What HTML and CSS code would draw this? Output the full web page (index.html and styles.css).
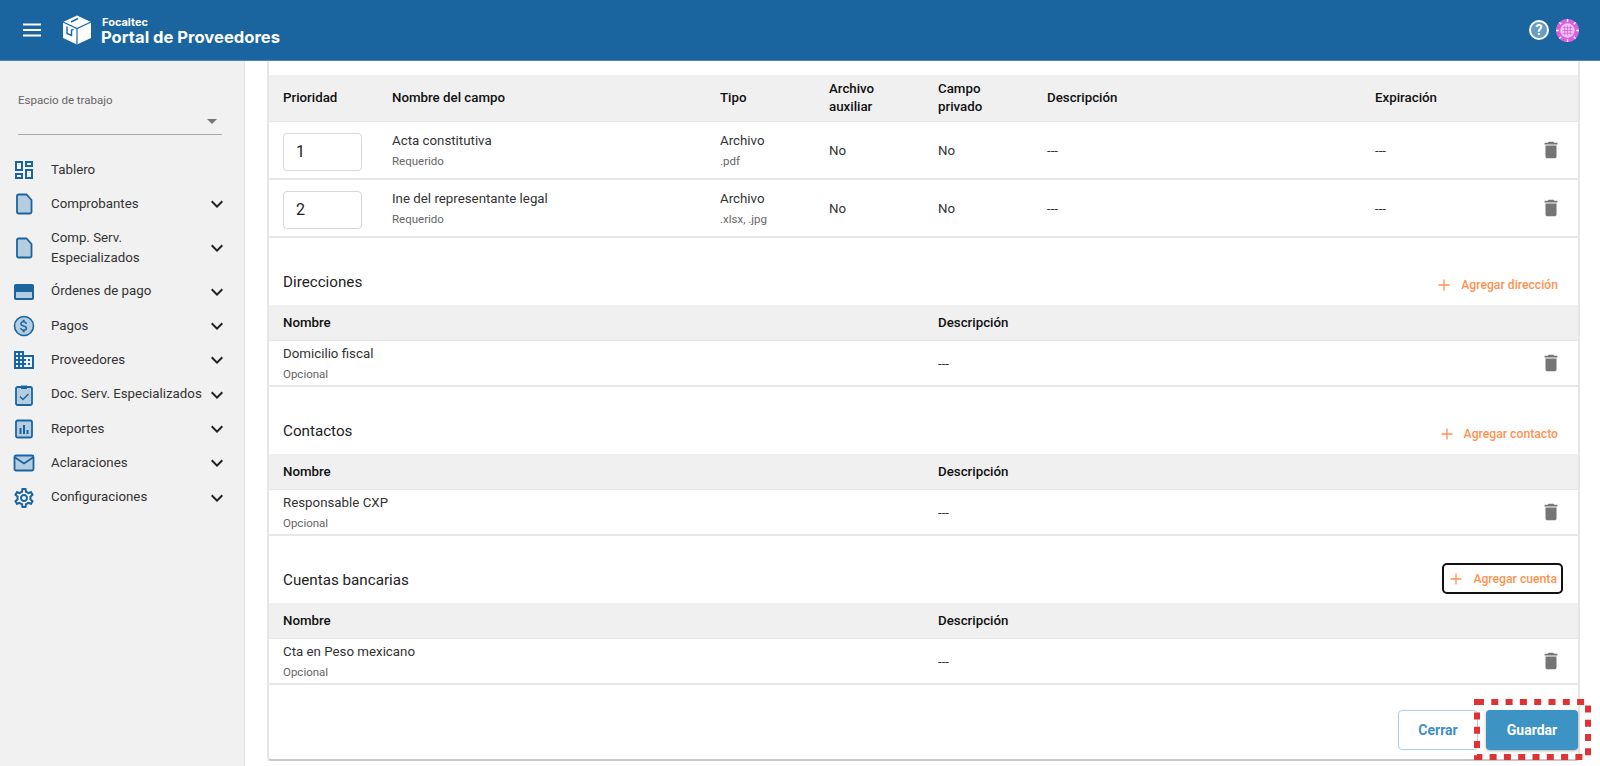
FILE: index.html
```html
<!DOCTYPE html>
<html lang="es">

<head>
    <meta charset="UTF-8">
    <meta name="viewport" content="width=device-width, initial-scale=1.0">
    <title>Portal de Proveedores</title>
    <link rel="stylesheet" href="styles.css">
</head>

<body>
    <svg class="defs" width="0" height="0">
        <symbol id="chev" viewBox="0 0 24 24"><path d="M7.41 8.59 12 13.17l4.59-4.58L18 10l-6 6-6-6z" /></symbol>
        <symbol id="trash" viewBox="0 0 24 24"><path d="M6 19c0 1.1.9 2 2 2h8c1.1 0 2-.9 2-2V7H6v12zM19 4h-3.5l-1-1h-5l-1 1H5v2h14V4z" /></symbol>
        <symbol id="plus" viewBox="0 0 12 12"><path d="M6 .5v11M.5 6h11" fill="none" stroke="currentColor" stroke-width="1.3" /></symbol>
        <symbol id="doc" viewBox="0 0 24 24"><path d="M6.500 2.500h8l5 5.500v12c0 .9-.7 1.500-1.500 1.500H6.500c-.8 0-1.500-.6-1.500-1.500V4c0-.9.700-1.500 1.500-1.500z" fill="#b5cde0" stroke="#1a659f" stroke-width="1.800" /></symbol>
    </svg>

    <header class="topbar">
        <svg class="burger" viewBox="0 0 18 14"><path d="M0 1.500h18M0 7h18M0 12.500h18" stroke="#fff" stroke-width="2" /></svg>
        <svg class="logo" viewBox="0 0 30 30"><path d="M15 .5 29 7v16l-14 6.500L1 23V7z" fill="#fff" /><path d="M15 13.500v16M1 7l14 6.500L29 7" fill="none" stroke="#1a659f" stroke-width="1.200" /><path d="M5 11.500v7l4.500 2v-5c0-1 1-1 2-.5M9 7l7-3.500" fill="none" stroke="#1a659f" stroke-width="1.400" /></svg>
        <div class="brand">
            <span class="brand-small">Focaltec</span>
            <span class="brand-big">Portal de Proveedores</span>
        </div>
        <div class="top-right">
            <span class="help">?</span>
            <svg class="avatar" viewBox="0 0 24 24">
                <circle cx="12" cy="12" r="12" fill="#d860e0" />
                <circle cx="12" cy="12" r="7.500" fill="#f3c4f4" />
                <path d="M7 9h10M7 12h10M7 15h10M9 7v10M12 7v10M15 7v10" stroke="#d860e0" stroke-width=".8" />
                <path d="M12 0v3M12 21v3M0 12h3M21 12h3M3.500 3.500l2 2M18.500 18.500l2 2M3.500 20.500l2-2M18.500 5.500l2-2" stroke="#fff" stroke-width="1.400" />
            </svg>
        </div>
    </header>

    <div class="layout">
        <aside class="sidebar">
            <div class="workspace">
                <label>Espacio de trabajo</label>
                <div class="select"><span class="caret"></span></div>
            </div>
            <nav class="menu">
                <a class="item">
                    <svg class="ico" viewBox="0 0 24 24"><path d="M19 5v2h-4V5h4M9 5v6H5V5h4m10 8v6h-4v-6h4M9 17v2H5v-2h4M21 3h-8v6h8V3zM11 3H3v10h8V3zm10 8h-8v10h8V11zm-10 4H3v6h8v-6z" /></svg>
                    <span class="lbl">Tablero</span>
                </a>
                <a class="item">
                    <svg class="ico"><use href="#doc" /></svg>
                    <span class="lbl">Comprobantes</span>
                    <svg class="chev"><use href="#chev" /></svg>
                </a>
                <a class="item tall">
                    <svg class="ico"><use href="#doc" /></svg>
                    <span class="lbl">Comp. Serv. Especializados</span>
                    <svg class="chev"><use href="#chev" /></svg>
                </a>
                <a class="item">
                    <svg class="ico" viewBox="0 0 24 24"><rect x="2" y="4" width="20" height="16" rx="2" fill="#b5cde0" /><path d="M20 4H4c-1.110 0-1.990.89-1.990 2L2 18c0 1.110.89 2 2 2h16c1.110 0 2-.89 2-2V6c0-1.110-.89-2-2-2zm0 14H4v-6h16v6zm0-10H4V6h16v2z" /><rect x="2" y="6" width="20" height="5" /></svg>
                    <span class="lbl">Órdenes de pago</span>
                    <svg class="chev"><use href="#chev" /></svg>
                </a>
                <a class="item">
                    <svg class="ico" viewBox="0 0 24 24"><circle cx="12" cy="12" r="9.500" fill="#b5cde0" stroke="#1a659f" stroke-width="1.600" /><path transform="translate(3.600 3.600) scale(.7)" d="M11.800 10.900c-2.270-.59-3-1.200-3-2.150 0-1.090 1.010-1.850 2.700-1.850 1.780 0 2.440.85 2.500 2.100h2.210c-.07-1.720-1.120-3.300-3.210-3.810V3h-3v2.160c-1.940.42-3.500 1.680-3.500 3.610 0 2.310 1.910 3.460 4.700 4.130 2.500.6 3 1.480 3 2.410 0 .69-.49 1.790-2.700 1.790-2.060 0-2.870-.92-2.980-2.100h-2.200c.12 2.190 1.760 3.420 3.700 3.830V21h3v-2.150c1.950-.37 3.500-1.500 3.500-3.550 0-2.840-2.430-3.810-4.700-4.400z" /></svg>
                    <span class="lbl">Pagos</span>
                    <svg class="chev"><use href="#chev" /></svg>
                </a>
                <a class="item">
                    <svg class="ico" viewBox="0 0 24 24"><path d="M12 7V3H2v18h20V7H12zM6 19H4v-2h2v2zm0-4H4v-2h2v2zm0-4H4V9h2v2zm0-4H4V5h2v2zm4 12H8v-2h2v2zm0-4H8v-2h2v2zm0-4H8V9h2v2zm0-4H8V5h2v2zm10 12h-8v-2h2v-2h-2v-2h2v-2h-2V9h8v10zm-2-8h-2v2h2v-2zm0 4h-2v2h2v-2z" /></svg>
                    <span class="lbl">Proveedores</span>
                    <svg class="chev"><use href="#chev" /></svg>
                </a>
                <a class="item">
                    <svg class="ico" viewBox="0 0 24 24"><rect x="4" y="4" width="16" height="18" rx="1.500" fill="#b5cde0" stroke="#1a659f" stroke-width="1.800" /><path d="M9 2.500h6V6H9z" /><path d="m8 13.500 3 3 5.500-5.500" fill="none" stroke="#1a659f" stroke-width="1.500" /></svg>
                    <span class="lbl nowrap">Doc. Serv. Especializados</span>
                    <svg class="chev"><use href="#chev" /></svg>
                </a>
                <a class="item">
                    <svg class="ico" viewBox="0 0 24 24"><rect x="4" y="3.500" width="16" height="17" rx="1.500" fill="#b5cde0" stroke="#1a659f" stroke-width="1.800" /><path d="M7.500 11h2v6h-2zM11 8h2v9h-2zM14.500 13h2v4h-2z" /></svg>
                    <span class="lbl">Reportes</span>
                    <svg class="chev"><use href="#chev" /></svg>
                </a>
                <a class="item">
                    <svg class="ico" viewBox="0 0 24 24"><rect x="2.500" y="4.500" width="19" height="15" rx="1.500" fill="#b5cde0" stroke="#1a659f" stroke-width="1.800" /><path d="m3 6.500 9 6 9-6" fill="none" stroke="#1a659f" stroke-width="1.800" /></svg>
                    <span class="lbl">Aclaraciones</span>
                    <svg class="chev"><use href="#chev" /></svg>
                </a>
                <a class="item">
                    <svg class="ico" viewBox="0 0 24 24"><path d="M19.430 12.980c.04-.32.07-.64.07-.98 0-.34-.03-.66-.07-.98l2.110-1.650c.19-.15.24-.42.12-.64l-2-3.460c-.09-.16-.26-.25-.44-.25-.06 0-.12.01-.17.03l-2.490 1c-.52-.4-1.080-.73-1.690-.98l-.38-2.650C14.460 2.180 14.250 2 14 2h-4c-.25 0-.46.18-.49.42l-.38 2.650c-.61.25-1.170.59-1.690.98l-2.490-1c-.06-.02-.12-.03-.18-.03-.17 0-.34.09-.43.25l-2 3.460c-.13.22-.07.49.12.64l2.110 1.650c-.04.32-.07.65-.07.98 0 .33.03.66.07.98l-2.110 1.650c-.19.15-.24.42-.12.64l2 3.460c.09.16.26.25.44.25.06 0 .12-.01.17-.03l2.490-1c.52.4 1.080.73 1.690.98l.38 2.650c.03.24.24.42.49.42h4c.25 0 .46-.18.49-.42l.38-2.650c.61-.25 1.170-.59 1.690-.98l2.490 1c.06.02.12.03.18.03.17 0 .34-.09.43-.25l2-3.460c.12-.22.07-.49-.12-.64l-2.110-1.650zm-1.980-1.710c.04.31.05.52.05.73 0 .21-.02.43-.05.73l-.14 1.130.89.7 1.080.84-.7 1.210-1.270-.51-1.040-.42-.9.68c-.43.32-.84.56-1.250.73l-1.060.43-.16 1.130-.2 1.350h-1.400l-.19-1.350-.16-1.130-1.060-.43c-.43-.18-.83-.41-1.230-.71l-.91-.7-1.060.43-1.270.51-.7-1.210 1.080-.84.89-.7-.14-1.130c-.03-.31-.05-.54-.05-.74s.02-.43.05-.73l.14-1.130-.89-.7-1.080-.84.7-1.210 1.270.51 1.040.42.9-.68c.43-.32.84-.56 1.250-.73l1.060-.43.16-1.130.2-1.350h1.390l.19 1.350.16 1.130 1.060.43c.43.18.83.41 1.230.71l.91.7 1.060-.43 1.270-.51.7 1.210-1.070.85-.89.7.14 1.130zM12 8c-2.210 0-4 1.790-4 4s1.790 4 4 4 4-1.790 4-4-1.790-4-4-4zm0 6c-1.100 0-2-.9-2-2s.9-2 2-2 2 .9 2 2-.9 2-2 2z" /></svg>
                    <span class="lbl">Configuraciones</span>
                    <svg class="chev"><use href="#chev" /></svg>
                </a>
            </nav>
        </aside>

        <main class="content">
            <div class="card">
                <!-- campos -->
                <div class="grid fields head">
                    <span>Prioridad</span>
                    <span>Nombre del campo</span>
                    <span>Tipo</span>
                    <span>Archivo auxiliar</span>
                    <span>Campo privado</span>
                    <span>Descripción</span>
                    <span>Expiración</span>
                </div>
                <div class="grid fields row">
                    <input class="prio" value="1">
                    <div><p>Acta constitutiva</p><small>Requerido</small></div>
                    <div><p>Archivo</p><small>.pdf</small></div>
                    <span>No</span>
                    <span>No</span>
                    <span>---</span>
                    <span>---</span>
                    <svg class="trash"><use href="#trash" /></svg>
                </div>
                <div class="grid fields row">
                    <input class="prio" value="2">
                    <div><p>Ine del representante legal</p><small>Requerido</small></div>
                    <div><p>Archivo</p><small>.xlsx, .jpg</small></div>
                    <span>No</span>
                    <span>No</span>
                    <span>---</span>
                    <span>---</span>
                    <svg class="trash"><use href="#trash" /></svg>
                </div>

                <!-- direcciones -->
                <div class="section-head">
                    <h3>Direcciones</h3>
                    <a class="add"><svg class="plus"><use href="#plus" /></svg>Agregar dirección</a>
                </div>
                <div class="grid simple head">
                    <span>Nombre</span>
                    <span>Descripción</span>
                </div>
                <div class="grid simple row small-row">
                    <div><p>Domicilio fiscal</p><small>Opcional</small></div>
                    <span>---</span>
                    <svg class="trash"><use href="#trash" /></svg>
                </div>

                <!-- contactos -->
                <div class="section-head">
                    <h3>Contactos</h3>
                    <a class="add"><svg class="plus"><use href="#plus" /></svg>Agregar contacto</a>
                </div>
                <div class="grid simple head">
                    <span>Nombre</span>
                    <span>Descripción</span>
                </div>
                <div class="grid simple row small-row">
                    <div><p>Responsable CXP</p><small>Opcional</small></div>
                    <span>---</span>
                    <svg class="trash"><use href="#trash" /></svg>
                </div>

                <!-- cuentas -->
                <div class="section-head">
                    <h3>Cuentas bancarias</h3>
                    <a class="add focused"><svg class="plus"><use href="#plus" /></svg>Agregar cuenta</a>
                </div>
                <div class="grid simple head">
                    <span>Nombre</span>
                    <span>Descripción</span>
                </div>
                <div class="grid simple row small-row">
                    <div><p>Cta en Peso mexicano</p><small>Opcional</small></div>
                    <span>---</span>
                    <svg class="trash"><use href="#trash" /></svg>
                </div>

                <div class="actions">
                    <button class="btn ghost">Cerrar</button>
                    <button class="btn solid">Guardar</button>
                    <svg class="marker" viewBox="0 0 117 61"><rect x="3" y="3" width="111" height="55" fill="none" stroke="#e03232" stroke-width="6" stroke-dasharray="7 7.300" /></svg>
                </div>
            </div>
        </main>
    </div>
</body>

</html>
```

FILE: styles.css
```css
* {
    padding: 0;
    margin: 0;
    box-sizing: border-box;
}

body {
    display: flex;
    flex-direction: column;
    height: 100vh;
    overflow: hidden;
    font-family: Roboto, "Liberation Sans", sans-serif;
    font-size: 13.3px;
    color: #333;
    background-color: #fff;
}

.defs {
    position: absolute;
}

/* header */
.topbar {
    display: flex;
    align-items: center;
    flex: none;
    height: 61px;
    padding: 0 21px 0 23px;
    background-color: #1a659f;
    border-bottom: 1px solid #4c86b5;
}

.burger {
    width: 18px;
    height: 14px;
}

.logo {
    width: 30px;
    height: 30px;
    margin-left: 21px;
}

.brand {
    display: flex;
    flex-direction: column;
    margin-left: 9px;
    padding-top: 2px;
    color: #fff;
    font-family: Inter, Roboto, sans-serif;
    font-weight: 700;
}

.brand-small {
    margin-left: 1px;
    font-size: 11px;
    line-height: 11px;
}

.brand-big {
    font-size: 16.6px;
    line-height: 18px;
}

.top-right {
    display: flex;
    align-items: center;
    gap: 7px;
    margin-left: auto;
}

.help {
    width: 20px;
    height: 20px;
    border: 2px solid #fff;
    border-radius: 50%;
    background-color: #679cc4;
    color: #fff;
    font-size: 14px;
    font-weight: 700;
    line-height: 16px;
    text-align: center;
}

.avatar {
    width: 23px;
    height: 23px;
}

.layout {
    display: flex;
    flex: 1;
    min-height: 0;
}

/* sidebar */
.sidebar {
    flex: none;
    width: 245px;
    background-color: #f1f1f1;
    border-right: 1px solid #e2e2e2;
}

.workspace {
    padding: 32px 22px 0 18px;
    height: 92px;
}

.workspace label {
    display: block;
    font-size: 11.5px;
    line-height: 14px;
    color: #666;
}

.select {
    position: relative;
    height: 28px;
    border-bottom: 1px solid #a8a8a8;
}

.caret {
    position: absolute;
    right: 5px;
    top: 12px;
    border-width: 5px 5px 0;
    border-style: solid;
    border-color: #777 transparent transparent;
}

.item {
    display: flex;
    align-items: center;
    height: 34.3px;
    padding: 0 19px 0 12px;
    line-height: 20.5px;
    color: #333;
}

.item.tall {
    height: 53px;
}

.ico {
    flex: none;
    width: 24px;
    height: 24px;
    fill: #1a659f;
}

.lbl {
    flex: 1;
    margin-left: 15px;
    width: 150px;
}

.nowrap {
    white-space: nowrap;
}

.chev {
    flex: none;
    width: 24px;
    height: 24px;
    margin-right: -4px;
    fill: #222;
}

/* content */
.content {
    flex: 1;
    min-width: 0;
    padding: 0 20px 5px 22px;
}

.card {
    height: 100%;
    padding-top: 14px;
    border-left: 2px solid #e6e6e6;
    border-right: 2px solid #e6e6e6;
    border-bottom: 2px solid #c9c9c9;
    border-radius: 0 0 4px 4px;
}

.grid {
    display: grid;
    align-items: center;
    padding-left: 14px;
}

.fields {
    grid-template-columns: 109px 328px 109px 109px 109px 328px 130px 1fr;
}

.simple {
    grid-template-columns: 655px 1fr 60px;
}

.head {
    background-color: #f0f0f0;
    border-bottom: 1px solid #e6e6e6;
    font-weight: 500;
    color: #111;
    line-height: 18px;
}

.fields.head {
    height: 47px;
}

.fields.head span:nth-child(4),
.fields.head span:nth-child(5) {
    width: 70px;
}

.simple.head {
    height: 36px;
}

.row {
    height: 58px;
    border-bottom: 2px solid #e8e8e8;
}

.small-row {
    height: 46px;
}

.row p {
    line-height: 18px;
    color: #333;
}

.row small {
    display: block;
    margin-top: 3px;
    font-size: 11.5px;
    line-height: 16px;
    color: #666;
}

.row > span {
    padding-top: 1px;
}

.prio {
    width: 79px;
    height: 38px;
    margin-top: 3px;
    padding-left: 12px;
    border: 1px solid #d6d6d6;
    border-radius: 4px;
    font-family: inherit;
    font-size: 16px;
    color: #222;
}

.trash {
    justify-self: end;
    width: 22px;
    height: 22px;
    margin-right: 16px;
    fill: #757575;
}

.section-head {
    position: relative;
    display: flex;
    align-items: flex-end;
    justify-content: space-between;
    height: 67px;
    padding: 0 20px 14px 14px;
}

.section-head h3 {
    font-size: 15.2px;
    font-weight: 400;
    line-height: 18px;
    color: #222;
}

.add {
    display: flex;
    align-items: center;
    margin-bottom: -3px;
    font-size: 12.2px;
    font-weight: 500;
    line-height: 18px;
    color: #ff9150;
}

.plus {
    width: 12px;
    height: 12px;
    margin-right: 11px;
}

.add.focused {
    position: absolute;
    right: 15px;
    bottom: 9px;
    margin: 0;
    height: 31px;
    padding: 0 4px 0 6px;
    border: 2px solid #111;
    border-radius: 5px;
}

.actions {
    position: relative;
    display: flex;
    justify-content: flex-end;
    gap: 8px;
    padding-top: 25px;
}

.btn {
    height: 40px;
    border-radius: 4px;
    font-family: inherit;
    font-size: 14px;
    font-weight: 700;
}

.ghost {
    width: 80px;
    background-color: #fff;
    border: 1px solid #a9d2ea;
    color: #3d8fc4;
}

.solid {
    width: 92px;
    background-color: #3d93c4;
    border: none;
    color: #fff;
    box-shadow: 0 1px 3px rgba(0, 0, 0, 0.3);
}

/* marca roja */
.marker {
    position: absolute;
    right: -13px;
    top: 14px;
    width: 117px;
    height: 61px;
}
```
